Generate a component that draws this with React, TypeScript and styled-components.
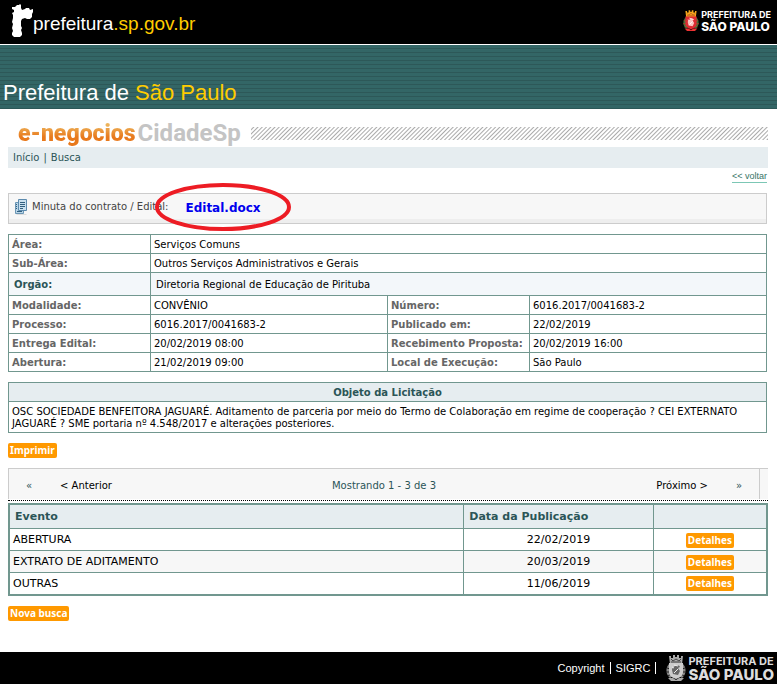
import React from "react";
import styled, { createGlobalStyle, css } from "styled-components";

const line = "#71978f";
const teal = "#2b5557";
const sans = `"Liberation Sans", Arial, sans-serif`;
const wide = `Verdana, "DejaVu Sans", sans-serif`;

const GlobalStyle = createGlobalStyle`
  * { box-sizing: border-box; }
  html, body, #root { min-height: 100vh; }
  body { margin: 0; background: #fff; color: #000; font: 10px/12px ${wide}; }
  a { color: inherit; text-decoration: none; }
  #root { display: flex; flex-direction: column; }
`;

const TopBar = styled.header`
  display: flex;
  justify-content: space-between;
  align-items: center;
  height: 45px;
  padding: 0 6px 2px 10px;
  background: #000;
  border-bottom: 1px solid #fff;
`;
const Portal = styled.a`
  display: flex;
  align-items: center;
  color: #fff;
  font: 19px/24px ${sans};
  span { padding-top: 6px; }
`;
const Gold = styled.b`
  color: #fc0;
  font-weight: 400;
`;
const CityMark = styled.a`
  display: flex;
  align-items: center;
  gap: 2px;
  color: #fff;
`;
const CityName = styled.span<{ $large?: boolean }>`
  display: flex;
  flex-direction: column;
  font-family: Inter, sans-serif;
  font-weight: 700;
  font-size: ${(p) => (p.$large ? 11 : 9)}px;
  line-height: ${(p) => (p.$large ? 12 : 10)}px;
  white-space: nowrap;
  color: ${(p) => (p.$large ? "#ddd" : "#fff")};
  b {
    font-weight: 800;
    font-size: ${(p) => (p.$large ? 15 : 12)}px;
    line-height: ${(p) => (p.$large ? 15 : 13)}px;
  }
`;
const Banner = styled.div`
  display: flex;
  align-items: flex-end;
  height: 64px;
  padding: 0 3px 3px;
  background: repeating-linear-gradient(#366 0 3px, #2d5858 3px 4px);
`;
const BannerTitle = styled.h1`
  margin: 0;
  color: #fff;
  font: 22px/26px ${sans};
`;
const Page = styled.main`
  display: flex;
  flex-direction: column;
  align-items: flex-start;
  flex: 1;
  padding: 10px 9px 30px 8px;
`;
const BrandRow = styled.div`
  display: flex;
  align-items: center;
  gap: 10px;
  align-self: stretch;
  height: 28px;
  padding-left: 10px;
`;
const Brand = styled.h2`
  display: flex;
  align-items: baseline;
  gap: 2px;
  margin: 0;
  font: 700 24px/26px Roboto, sans-serif;
  color: #c4c4c4;
  span {
    color: transparent;
    font-size: 23px;
    font-weight: 900;
    background: linear-gradient(#edb45c 4px, #e8791c 16px);
    background-clip: text;
  }
`;
const Hatch = styled.div`
  flex: 1;
  height: 13px;
  background: repeating-linear-gradient(135deg, #fff 0 1px, #aaa 2px, #fff 3px);
`;
const Crumbs = styled.nav`
  display: flex;
  gap: 4px;
  align-self: stretch;
  height: 21px;
  padding: 5px;
  background: #e6edf0;
  color: ${teal};
`;
const Back = styled.a`
  align-self: flex-end;
  margin: 3px 1px 10px;
  border-bottom: 1px solid #7cc7b5;
  color: #367466;
  font: 9px/11px ${sans};
`;
const DocBar = styled.section`
  position: relative;
  display: flex;
  align-items: center;
  align-self: stretch;
  height: 31px;
  margin: 0 1px 10px 0;
  padding-left: 5px;
  border: 1px solid #ccc;
  background: linear-gradient(#f7f7f7 25px, #eee 25px);
`;
const DocLabel = styled.span`
  display: flex;
  align-items: center;
  gap: 4px;
  color: #444;
  height: 25px;
  margin-bottom: 4px;
`;
const DocLink = styled.a`
  margin: 0 0 2px 17px;
  color: #00e;
  font-size: 12px;
  font-weight: 700;
`;
const Mark = styled.svg`
  position: absolute;
  left: 145px;
  top: -13px;
`;
const grid = css`
  border-collapse: collapse;
  table-layout: fixed;
  th, td { border: 1px solid ${line}; padding: 4px 3px 2px; text-align: left; font-weight: 400; }
`;
const InfoTable = styled.table`
  ${grid}
  width: calc(100% - 1px);
  margin-bottom: 10px;
  th { color: #666; font-weight: 700; white-space: nowrap; }
`;
const Organ = styled.tr`
  background: #f3f7fa;
  && th, && td { padding: 6px 5px 4px; }
  && th { color: ${teal}; }
`;
const ObjectTable = styled.table`
  ${grid}
  width: calc(100% - 1px);
  margin-bottom: 10px;
  th { background: #e6edf0; color: ${teal}; font-weight: 700; text-align: center; }
`;
const Button = styled.button`
  display: block;
  height: 15px;
  padding: 0 2px;
  border: 0;
  border-radius: 2px;
  background: #f90;
  color: #fff;
  font: 700 10px/15px "Noto Sans", sans-serif;
  white-space: nowrap;
`;
const Pager = styled.nav`
  align-self: stretch;
  margin-top: 10px;
  padding-right: 8px;
  border: solid #ccc;
  border-width: 1px 0 0 1px;
  background: #f7f7f7;
`;
const PagerRow = styled.div`
  display: grid;
  grid-template-columns: 40px 1fr auto 1fr 40px;
  align-items: center;
  height: 30px;
  padding-top: 4px;
  border-right: 1px solid #ccc;
  text-align: center;
  color: ${teal};
`;
const Step = styled.a<{ $side?: "left" | "right" }>`
  color: ${(p) => (p.$side ? "#000" : teal)};
  text-align: ${(p) => p.$side || "center"};
  padding: 0 11px;
`;
const Dots = styled.div`
  align-self: stretch;
  height: 3px;
  margin-top: 1px;
  border-top: 1px dotted #000;
`;
const EventTable = styled.table`
  ${grid}
  width: 100%;
  margin-bottom: 10px;
  border: 2px solid ${line};
  font-size: 11px;
  th { padding: 5px 5px 4px; background: #e6edf0; color: ${teal}; font-weight: 700; line-height: 14px; }
  td { height: 22px; padding: 3px 3px 2px; }
  td:nth-child(2) { text-align: center; }
  tbody tr:nth-child(even) { background: #f7f7f7; }
  button { margin: 0 auto; }
`;
const Footer = styled.footer`
  display: flex;
  justify-content: flex-end;
  align-items: center;
  height: 32px;
  padding-right: 3px;
  background: #000;
  color: #fff;
  font: 11px/12px ${sans};
`;
const FootLink = styled.a`
  margin-right: 5px;
  padding-right: 5px;
  border-right: 1px solid #fff;
`;
const FootMark = styled(CityMark)`
  margin-left: 5px;
`;

const Statue = () => (
  <svg width="23" height="34" viewBox="0 0 23 34" fill="#fff" aria-hidden="true">
    <path d="M2 3l3 0 2-2h2l1-1 1 1v3l1 2 3-1 1-1h3l1 2 3-1v3l-1 2v3l-2 2h-3l-2-1-3 1-1 2v5l1 2-1 2 1 3v2l-2 2H4l-2-2v-2l1-2-1-3 1-4-1-2 1-4v-3L2 9l2-1V6L2 5z" />
  </svg>
);

const Crest = ({ mono, size }: { mono?: boolean; size: number }) => {
  const c = (color: string, gray: string) => (mono ? gray : color);
  return (
    <svg width={size} height={Math.round(size * 1.35)} viewBox="0 0 20 27" aria-hidden="true">
      <path d="M3 1h2v2h2V0h2v2h2V0h2v3h2V1h2l-1 8H4z" fill={c("#f5a81c", "#aaa")} />
      <path d="M5 4l2 2 3-2 3 2 2-2M5 7h10" fill="none" stroke={c("#b5531c", "#444")} />
      <path d="M3 9C-1 13 0 20 4 23l3-2V10zM17 9c4 4 3 11-1 14l-3-2V10z" fill={c("#39773b", "#888")} />
      <path d="M1 13l3 1M0 17l4 0M2 21l3-2M19 13l-3 1M20 17h-4M18 21l-3-2" stroke={c("#c0392b", "#222")} />
      <path d="M3 8h14v9c0 4-4 6-7 7-3-1-7-3-7-7z" fill={c("#dd2b32", "#ccc")} />
      <path d="M6 15c0-4 7-6 8-3l-2 1 2 3-2 4-5-1z" fill={c("#f8c5c1", "#666")} />
      <path d="M8 10l4 1M8 18l4-4M6 12l2 1" stroke={c("#fff", "#eee")} />
      <path d="M2 23l5 0 3 2 3-2h5l-3 3H5z" fill={c("#e33", "#aaa")} />
    </svg>
  );
};

const City = ({ large }: { large?: boolean }) => (
  <CityName $large={large}>
    PREFEITURA DE
    <b>SÃO PAULO</b>
  </CityName>
);

const Pages = () => (
  <svg width="14" height="18" viewBox="0 0 14 18" aria-hidden="true">
    <path d="M3 16h9l1 1H2z" fill="#ddd" />
    <path d="M1.500 4.500h8v11h-8z" fill="#b8d4e6" stroke="#6b96b5" />
    <path d="M4.500 1.500h8v11h-8z" fill="#c9e0ef" stroke="#5c8bae" />
    <path d="M6 4.500h5M6 6.500h5M6 8.500h5M6 10.500h3M2 6.500h1M2 8.500h1M2 10.500h1M3 13.500h5" stroke="#315f7e" />
  </svg>
);

const details = [
  ["Modalidade:", "CONVÊNIO", "Número:", "6016.2017/0041683-2"],
  ["Processo:", "6016.2017/0041683-2", "Publicado em:", "22/02/2019"],
  ["Entrega Edital:", "20/02/2019 08:00", "Recebimento Proposta:", "20/02/2019 16:00"],
  ["Abertura:", "21/02/2019 09:00", "Local de Execução:", "São Paulo"],
];
const events = [
  ["ABERTURA", "22/02/2019"],
  ["EXTRATO DE ADITAMENTO", "20/03/2019"],
  ["OUTRAS", "11/06/2019"],
];

export default function App() {
  return (
    <>
      <GlobalStyle />
      <TopBar>
        <Portal href="#">
          <Statue />
          <span>prefeitura<Gold>.sp.gov.br</Gold></span>
        </Portal>
        <CityMark href="#"><Crest size={16} /><City /></CityMark>
      </TopBar>
      <Banner>
        <BannerTitle>Prefeitura de <Gold>São Paulo</Gold></BannerTitle>
      </Banner>
      <Page>
        <BrandRow>
          <Brand><span>e-negocios</span>CidadeSp</Brand>
          <Hatch />
        </BrandRow>
        <Crumbs><a href="#">Início</a>|<a href="#">Busca</a></Crumbs>
        <Back href="#">&lt;&lt; voltar</Back>
        <DocBar>
          <DocLabel><Pages />Minuta do contrato / Edital:</DocLabel>
          <DocLink href="#">Edital.docx</DocLink>
          <Mark width="140" height="52" viewBox="0 0 140 52" aria-hidden="true">
            <ellipse cx="69" cy="26" rx="66" ry="22" fill="none" stroke="#ed1c24" strokeWidth="4" />
          </Mark>
        </DocBar>
        <InfoTable>
          <colgroup>
            <col width="142" /><col /><col width="142" /><col />
          </colgroup>
          <tbody>
            <tr><th scope="row">Área:</th><td colSpan={3}>Serviços Comuns</td></tr>
            <tr><th scope="row">Sub-Área:</th><td colSpan={3}>Outros Serviços Administrativos e Gerais</td></tr>
            <Organ><th scope="row">Orgão:</th><td colSpan={3}>Diretoria Regional de Educação de Pirituba</td></Organ>
            {details.map(([a, b, c, d]) => (
              <tr key={a}><th scope="row">{a}</th><td>{b}</td><th scope="row">{c}</th><td>{d}</td></tr>
            ))}
          </tbody>
        </InfoTable>
        <ObjectTable>
          <thead><tr><th scope="col">Objeto da Licitação</th></tr></thead>
          <tbody>
            <tr><td>OSC SOCIEDADE BENFEITORA JAGUARÉ. Aditamento de parceria por meio do Termo de Colaboração em regime de cooperação ? CEI EXTERNATO JAGUARÉ ? SME portaria nº 4.548/2017 e alterações posteriores.</td></tr>
          </tbody>
        </ObjectTable>
        <Button type="button">Imprimir</Button>
        <Pager>
          <PagerRow>
            <Step href="#">«</Step>
            <Step href="#" $side="left">&lt; Anterior</Step>
            <span>Mostrando 1 - 3 de 3</span>
            <Step href="#" $side="right">Próximo &gt;</Step>
            <Step href="#">»</Step>
          </PagerRow>
        </Pager>
        <Dots />
        <EventTable>
          <colgroup>
            <col width="60%" /><col width="25%" /><col width="15%" />
          </colgroup>
          <thead>
            <tr><th scope="col">Evento</th><th scope="col">Data da Publicação</th><th /></tr>
          </thead>
          <tbody>
            {events.map(([name, date]) => (
              <tr key={name}><td>{name}</td><td>{date}</td><td><Button type="button">Detalhes</Button></td></tr>
            ))}
          </tbody>
        </EventTable>
        <Button type="button">Nova busca</Button>
      </Page>
      <Footer>
        <FootLink href="#">Copyright</FootLink>
        <FootLink href="#">SIGRC</FootLink>
        <FootMark href="#"><Crest size={20} mono /><City large /></FootMark>
      </Footer>
    </>
  );
}
